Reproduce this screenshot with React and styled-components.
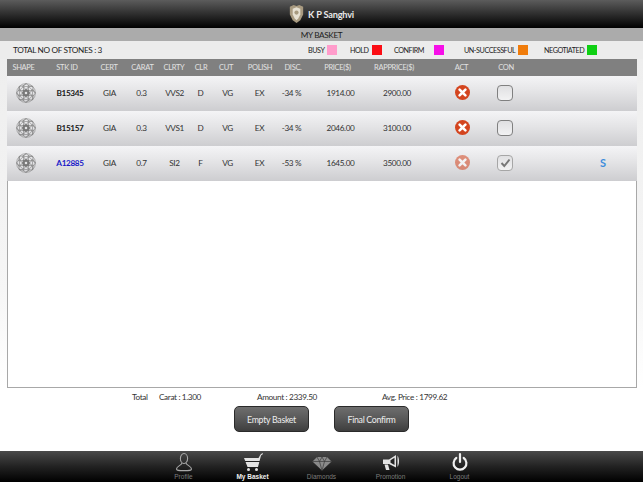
import React from 'react';
import styled, { createGlobalStyle } from 'styled-components';

const GlobalStyle = createGlobalStyle`
  html, body { margin: 0; padding: 0; background: #fff; }
  body { font-family: Lato, "Open Sans", sans-serif; }
`;

const Page = styled('div')`
  width: 643px;
  height: 482px;
  display: flex;
  flex-direction: column;
  overflow: hidden;
  background: #fff;
  letter-spacing: -0.35px;
`;

const Header = styled('div')`
  height: 28px;
  flex: none;
  display: flex;
  align-items: center;
  justify-content: center;
  gap: 3px;
  padding-right: 1px;
  background: linear-gradient(180deg, #5c5c5c 0%, #2e2e2e 50%, #000 100%);
`;

const Brand = styled('span')`
  font-size: 9.2px;
  font-weight: 700;
  letter-spacing: -0.2px;
  color: #e8e8e8;
`;

const TitleBar = styled('div')`
  height: 13px;
  flex: none;
  display: flex;
  align-items: center;
  justify-content: center;
  background: #ababab;
  font-size: 8.2px;
  color: #1c1c1c;
`;

const LegendBar = styled('div')`
  height: 18px;
  flex: none;
  display: flex;
  align-items: center;
  padding-left: 13px;
  background: #ececec;
  color: #222;
`;

const StoneCount = styled('span')`
  font-size: 8.2px;
  width: 295px;
  flex: none;
`;

const LegendItem = styled('div')`
  display: flex;
  align-items: center;
  gap: ${(props) => props.$gap}px;
  font-size: 7.2px;
  letter-spacing: -0.45px;
  flex: none;
  width: ${(props) => props.$width}px;
`;

const Swatch = styled('span')`
  width: 10px;
  height: 10px;
  flex: none;
  background: ${(props) => props.$color};
`;

const Main = styled('div')`
  flex: none;
  padding: 0 6px 0 7px;
  background: linear-gradient(180deg, #eeeeee 0%, #f6f6f6 70%, #ffffff 100%);
`;

const Content = styled('div')`
  height: 329px;
  box-sizing: border-box;
  border: 1px solid #a8a8a8;
  border-top: 0;
  display: flex;
  flex-direction: column;
  background: #fff;
`;

const HeadRow = styled('div')`
  height: 17px;
  flex: none;
  display: grid;
  grid-template-columns: 33px 54px 30px 37px 26px 28px 22px 46px 20px 69px 44px 68px 44px 1fr;
  align-items: center;
  margin: 0 -1px;
  background: #808080;
  font-size: 7.5px;
  letter-spacing: -0.3px;
  color: #e2e2e2;
  text-align: center;
`;

const Row = styled('div')`
  height: 35px;
  flex: none;
  box-sizing: border-box;
  padding-bottom: 2px;
  display: grid;
  grid-template-columns: 38px 50px 29px 35px 31px 21px 33px 31px 33px 65px 48px 63px 42px 1fr;
  align-items: center;
  margin: 0 -1px;
  background: linear-gradient(180deg, #f4f4f6 0%, #e4e4e6 45%, #cdcdd0 100%);
  font-size: 8.2px;
  color: #333;
  text-align: center;
`;

const StockId = styled('span')`
  font-weight: 700;
  color: ${(props) => (props.$link ? '#1a1ac8' : '#1a1a1a')};
`;

const IconCell = styled('div')`
  display: flex;
  justify-content: center;
  align-items: center;
  padding-left: ${(props) => props.$inset || 0}px;
  opacity: ${(props) => (props.$faded ? 0.55 : 1)};
`;

const Checkbox = styled('div')`
  width: 16px;
  height: 16px;
  box-sizing: border-box;
  display: flex;
  align-items: center;
  justify-content: center;
  border: 1.5px solid ${(props) => (props.$faded ? '#a6a6a6' : '#808080')};
  border-radius: 4px;
  background: linear-gradient(180deg, #e0e0e2, #f2f2f3);
`;

const StatusMark = styled('span')`
  font-size: 11px;
  font-weight: 700;
  letter-spacing: 0;
  color: #3d8ddc;
  text-align: right;
  padding-right: 31px;
`;

const Totals = styled('div')`
  height: 17px;
  flex: none;
  display: flex;
  align-items: center;
  padding-left: 132px;
  font-size: 8.2px;
  color: #333;
`;

const TotalItem = styled('span')`
  width: ${(props) => props.$width}px;
  flex: none;
`;

const Actions = styled('div')`
  flex: none;
  display: flex;
  justify-content: center;
  gap: 25px;
  margin-top: 1px;
`;

const DarkButton = styled('div')`
  width: 75px;
  height: 26px;
  box-sizing: border-box;
  display: flex;
  align-items: center;
  justify-content: center;
  border: 1px solid #2a2a2a;
  border-radius: 5px;
  background: linear-gradient(180deg, #6e6e6e 0%, #585858 50%, #3e3e3e 100%);
  font-size: 8.8px;
  letter-spacing: -0.3px;
  color: #eee;
`;

const TabBar = styled('div')`
  margin-top: auto;
  height: 31px;
  flex: none;
  display: flex;
  justify-content: center;
  background: linear-gradient(180deg, #4a4a4a 0%, #222 50%, #000 100%);
`;

const Tab = styled('div')`
  width: 69px;
  display: flex;
  flex-direction: column;
  align-items: center;
  justify-content: flex-end;
  padding-bottom: 1px;
`;

const TabLabel = styled('span')`
  font-family: "Liberation Sans", Arial, sans-serif;
  font-size: 6.5px;
  line-height: 9px;
  letter-spacing: 0;
  color: ${(props) => (props.$active ? '#f0f0f0' : '#7c7c7c')};
  font-weight: ${(props) => (props.$active ? 700 : 400)};
`;

const TabIcon = styled('svg')`
  display: block;
  width: 24px;
  height: 20px;
`;

const Logo = () => (
  <svg width="17" height="20" viewBox="0 0 16 21">
    <path d="M1 3 L5 1 L8 2 L11 1 L15 3 L15 11 L12 17 L8 20 L4 17 L1 11 Z" fill="#a89a80" />
    <path d="M4 5 L8 3.5 L12 5 L12 11 L10 15 L8 17 L6 15 L4 11 Z" fill="#e6e0d2" />
    <circle cx="8" cy="9" r="2.2" fill="#a79a80" />
  </svg>
);

const DiamondShape = () => (
  <svg width="20" height="20" viewBox="0 0 20 20" fill="none" stroke="#757575" strokeWidth="0.55">
    <circle cx="10" cy="10" r="9.4" />
    <circle cx="10" cy="10" r="6.6" />
    <circle cx="10" cy="10" r="3.6" />
    {[0, 45, 90, 135, 180, 225, 270, 315].map((a) => (
      <g key={a} transform={`rotate(${a} 10 10)`}>
        <path d="M10 .6 L13.6 3.4 L10 6.4 L6.4 3.4 Z" />
        <path d="M13.6 3.4 L16.6 3.4" />
        <path d="M10 6.4 L12.6 9 L10 13.6 L7.4 9 Z" />
      </g>
    ))}
  </svg>
);

const RemoveIcon = () => (
  <svg width="15" height="15" viewBox="0 0 15 15">
    <circle cx="7.5" cy="7.5" r="7.5" fill="#d4451f" />
    <path d="M4.6 4.6 L10.4 10.4 M10.4 4.6 L4.6 10.4" stroke="#fff" strokeWidth="2.6" strokeLinecap="round" />
  </svg>
);

const CheckMark = () => (
  <svg width="11" height="10" viewBox="0 0 11 10">
    <path d="M1.5 5 L4.3 8 L9.5 1.5" fill="none" stroke="#777" strokeWidth="2" />
  </svg>
);

const tabIcons = {
  profile: (
    <g fill="none" stroke="#a8a8a8" strokeWidth="1.1">
      <ellipse cx="12" cy="6.5" rx="3.6" ry="5" />
      <path d="M10 11 C9.6 13.5 4.5 14 4.5 17 C4.5 18.5 6 18.6 12 18.6 C18 18.6 19.5 18.5 19.5 17 C19.5 14 14.4 13.5 14 11" />
    </g>
  ),
  basket: (
    <g fill="#e4e4e4">
      <path d="M3 6 L17.5 6 L19.5 2.5 L21.5 1 L22 2 L20 3.5 L17 15 L6.5 15 L3 6 Z" />
      <circle cx="7.5" cy="17.5" r="1.5" />
      <circle cx="15.5" cy="17.5" r="1.5" />
      <path d="M4 9 H19 V10 H4 Z" fill="#222" />
    </g>
  ),
  diamond: (
    <g>
      <path d="M7 5 H17 L21.5 9.5 L12 18.5 L2.5 9.5 Z" fill="#8a8a8a" />
      <path d="M2.5 9.5 H21.5 M7 5 L9.5 9.5 L12 18.5 L14.5 9.5 L17 5 M9.5 9.5 L12 5 L14.5 9.5" fill="none" stroke="#3a3a3a" strokeWidth="0.7" />
    </g>
  ),
  promotion: (
    <g fill="#e4e4e4">
      <path d="M4 7.5 H10 L17 3 V15.5 L10 12 H4 Z" />
      <path d="M5.5 12.5 H9 L10.5 18 H7 Z" />
      <path d="M18.5 3.5 C20.5 6.5 20.5 12 18.5 15 Z" />
      <path d="M11.5 8.2 L15.5 5.8 V13 L11.5 10.8 Z" fill="#222" />
    </g>
  ),
  logout: (
    <g fill="none" stroke="#efefef" strokeWidth="2.2" strokeLinecap="round">
      <path d="M12 2 V10" />
      <path d="M8.3 6 A6.4 6.4 0 1 0 15.7 6" />
    </g>
  ),
};

const tabs = [
  { id: 'profile', label: 'Profile' },
  { id: 'basket', label: 'My Basket', active: true },
  { id: 'diamond', label: 'Diamonds' },
  { id: 'promotion', label: 'Promotion' },
  { id: 'logout', label: 'Logout' },
];

const legend = [
  { label: 'BUSY', color: '#ff9ccb', width: 42, gap: 3 },
  { label: 'HOLD', color: '#fb0d14', width: 44, gap: 3 },
  { label: 'CONFIRM', color: '#f60fe8', width: 70, gap: 10 },
  { label: 'UN-SUCCESSFUL', color: '#f07c0b', width: 80, gap: 3 },
  { label: 'NEGOTIATED', color: '#0fd014', width: 80, gap: 3 },
];

const headings = ['SHAPE', 'STK ID', 'CERT', 'CARAT', 'CLRTY', 'CLR', 'CUT', 'POLISH', 'DISC.', 'PRICE($)', 'RAPPRICE($)'];

const stones = [
  { id: 'B15345', carat: '0.3', clarity: 'VVS2', color: 'D', disc: '-34 %', price: '1914.00', rap: '2900.00' },
  { id: 'B15157', carat: '0.3', clarity: 'VVS1', color: 'D', disc: '-34 %', price: '2046.00', rap: '3100.00' },
  { id: 'A12885', carat: '0.7', clarity: 'SI2', color: 'F', disc: '-53 %', price: '1645.00', rap: '3500.00', confirmed: true },
];

const App = () => (
  <Page>
    <GlobalStyle />
    <Header>
      <Logo />
      <Brand>K P Sanghvi</Brand>
    </Header>
    <TitleBar>MY BASKET</TitleBar>
    <LegendBar>
      <StoneCount>TOTAL NO OF STONES : 3</StoneCount>
      {legend.map((l) => (
        <LegendItem key={l.label} $width={l.width} $gap={l.gap}>
          {l.label}
          <Swatch $color={l.color} />
        </LegendItem>
      ))}
    </LegendBar>
    <Main>
      <Content>
        <HeadRow>
          {headings.map((h) => (
            <span key={h}>{h}</span>
          ))}
          <IconCell $inset={23}>ACT</IconCell>
          <span>CON</span>
        </HeadRow>
        {stones.map((s) => (
          <Row key={s.id}>
            <IconCell>
              <DiamondShape />
            </IconCell>
            <StockId $link={s.confirmed}>{s.id}</StockId>
            <span>GIA</span>
            <span>{s.carat}</span>
            <span>{s.clarity}</span>
            <span>{s.color}</span>
            <span>VG</span>
            <span>EX</span>
            <span>{s.disc}</span>
            <span>{s.price}</span>
            <span>{s.rap}</span>
            <IconCell $inset={19} $faded={s.confirmed}>
              <RemoveIcon />
            </IconCell>
            <IconCell>
              <Checkbox $faded={s.confirmed}>{s.confirmed && <CheckMark />}</Checkbox>
            </IconCell>
            {s.confirmed ? <StatusMark>S</StatusMark> : <span />}
          </Row>
        ))}
      </Content>
    </Main>
    <Totals>
      <TotalItem $width={27}>Total</TotalItem>
      <TotalItem $width={98}>Carat : 1.300</TotalItem>
      <TotalItem $width={125}>Amount : 2339.50</TotalItem>
      <TotalItem $width={90}>Avg. Price : 1799.62</TotalItem>
    </Totals>
    <Actions>
      <DarkButton>Empty Basket</DarkButton>
      <DarkButton>Final Confirm</DarkButton>
    </Actions>
    <TabBar>
      {tabs.map((t) => (
        <Tab key={t.id}>
          <TabIcon viewBox="0 0 24 20">{tabIcons[t.id]}</TabIcon>
          <TabLabel $active={t.active}>{t.label}</TabLabel>
        </Tab>
      ))}
    </TabBar>
  </Page>
);

export default App;
